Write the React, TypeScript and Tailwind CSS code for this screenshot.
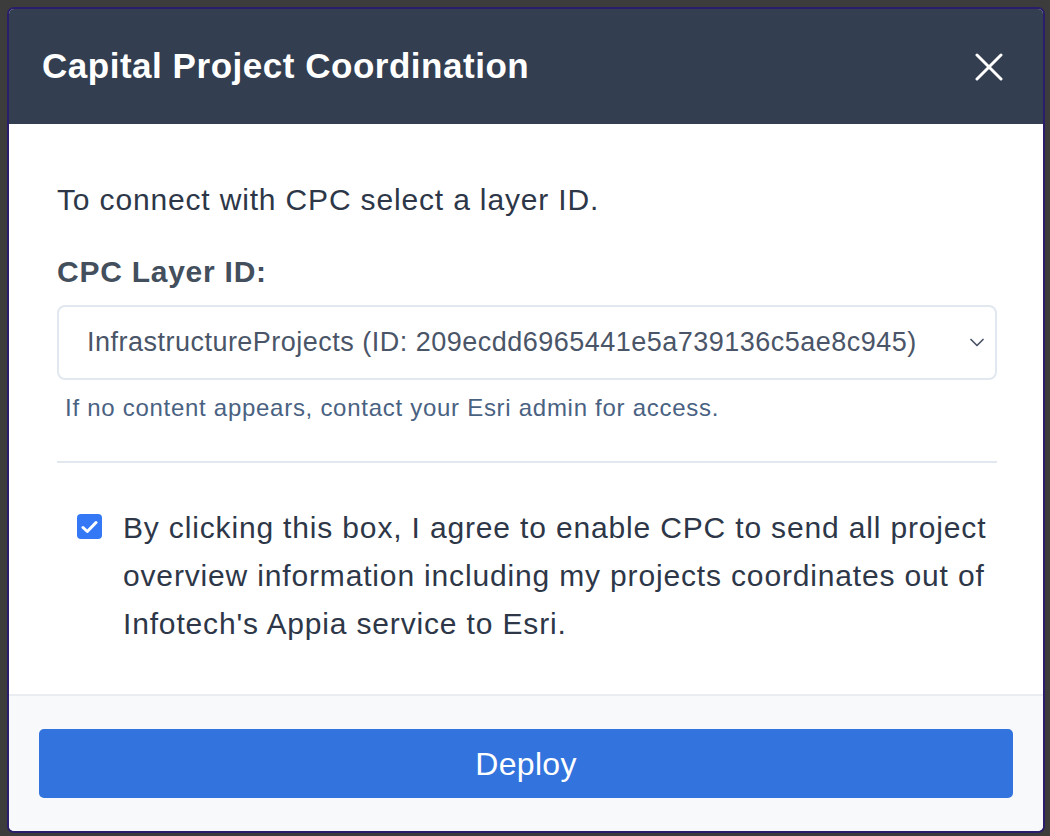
import { useState } from "react";

const font = { fontFamily: '"Liberation Sans", Arial, sans-serif' };

function CloseIcon() {
  return (
    <svg width="28" height="28" viewBox="0 0 28 28" fill="none">
      <path
        d="M2 2 L26 26 M26 2 L2 26"
        stroke="#ffffff"
        strokeWidth="3"
        strokeLinecap="round"
      />
    </svg>
  );
}

function Chevron() {
  return (
    <svg width="14" height="9" viewBox="0 0 14 9" fill="none">
      <path
        d="M1 1.5 L7 7.5 L13 1.5"
        stroke="#4a5568"
        strokeWidth="1.7"
        strokeLinecap="round"
        strokeLinejoin="round"
      />
    </svg>
  );
}

export default function App() {
  const [agreed, setAgreed] = useState(true);

  return (
    <div
      className="h-[836px] w-[1050px] bg-[#3c3c3c] pt-[7px] pb-[3px] pl-[7px] pr-[5px]"
      style={font}
    >
      <div className="flex h-full flex-col overflow-hidden rounded-[7px] border-2 border-[#2a1d6b] bg-white">
        {/* header */}
        <div className="flex h-[115px] shrink-0 items-center justify-between bg-[#333f51] pl-[33px] pr-[40px]">
          <h1 className="text-[35px] font-bold tracking-[0.015em] text-white">
            Capital Project Coordination
          </h1>
          <button className="flex h-[28px] w-[28px] items-center justify-center">
            <CloseIcon />
          </button>
        </div>

        {/* body */}
        <div className="flex flex-1 flex-col pl-[48px] pr-[46px] pt-[58px]">
          <p className="text-[30px] leading-[36px] tracking-[0.028em] text-[#2d3748]">
            To connect with CPC select a layer ID.
          </p>
          <label className="mt-[36px] text-[30px] font-bold leading-[36px] tracking-[0.025em] text-[#434f5c]">
            CPC Layer ID:
          </label>
          <div className="mt-[15px] flex h-[75px] items-center justify-between rounded-[8px] border-2 border-[#e2e8f0] pl-[28px] pr-[11px]">
            <span className="text-[27px] tracking-[0.018em] text-[#4a5568]">
              InfrastructureProjects (ID: 209ecdd6965441e5a739136c5ae8c945)
            </span>
            <Chevron />
          </div>
          <p className="mt-[14px] pl-[8px] text-[24px] leading-[28px] tracking-[0.03em] text-[#4a6282]">
            If no content appears, contact your Esri admin for access.
          </p>
          <div className="mt-[39px] h-[2px] bg-[#e2e8f0]" />
          <div className="mt-[41px] flex items-start gap-[21px] pl-[20px]">
            <button
              onClick={() => setAgreed(!agreed)}
              className={`mt-[10px] flex h-[25px] w-[25px] shrink-0 items-center justify-center rounded-[4px] ${
                agreed ? "bg-[#3478f6]" : "border-2 border-[#9ca3af] bg-white"
              }`}
            >
              {agreed && (
                <svg width="17" height="14" viewBox="0 0 17 14" fill="none">
                  <path
                    d="M2 7.5 L6.3 11.5 L15 2.5"
                    stroke="#ffffff"
                    strokeWidth="3"
                    strokeLinecap="round"
                    strokeLinejoin="round"
                  />
                </svg>
              )}
            </button>
            <p className="text-[30px] leading-[48px] tracking-[0.028em] text-[#2d3748]">
              By clicking this box, I agree to enable CPC to send all project
              overview information including my projects coordinates out of
              Infotech's Appia service to Esri.
            </p>
          </div>
        </div>

        {/* footer */}
        <div className="shrink-0 border-t-2 border-[#e9edf1] bg-[#f8f9fb] px-[30px] py-[33px]">
          <button className="flex h-[69px] w-full items-center justify-center rounded-[5px] bg-[#3273dd] text-[32px] tracking-[0.01em] text-white">
            Deploy
          </button>
        </div>
      </div>
    </div>
  );
}
